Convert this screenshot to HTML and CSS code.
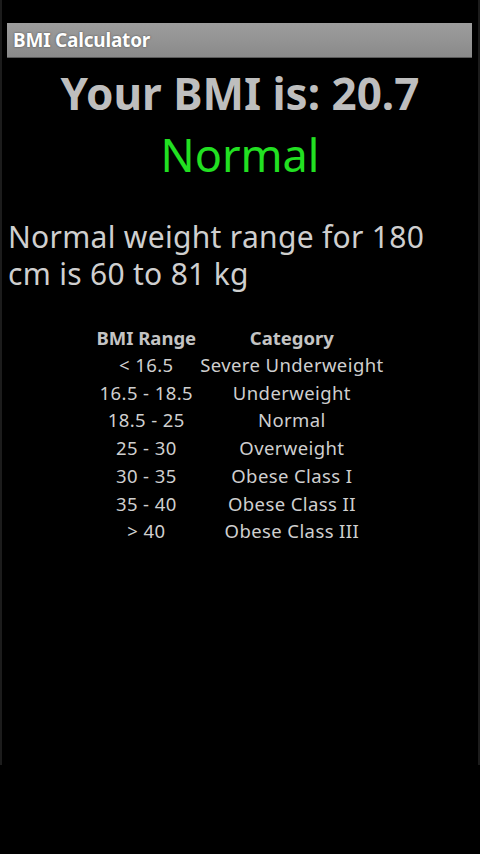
FILE: index.html
```html
<!DOCTYPE html>
<html>
<head>
<meta charset="utf-8">
<link rel="stylesheet" href="styles.css">
</head>
<body>
<div class="screen">
  <div class="status"></div>
  <div class="titlebar"><span class="title">BMI Calculator</span></div>
  <div class="content">
    <h1 class="result">Your BMI is: 20.7</h1>
    <div class="category">Normal</div>
    <p class="range">Normal weight range for 180 cm is 60 to 81 kg</p>
    <table class="bmi-table">
      <thead>
        <tr><th>BMI Range</th><th>Category</th></tr>
      </thead>
      <tbody>
        <tr><td>&lt; 16.5</td><td>Severe Underweight</td></tr>
        <tr><td>16.5 - 18.5</td><td>Underweight</td></tr>
        <tr><td>18.5 - 25</td><td>Normal</td></tr>
        <tr><td>25 - 30</td><td>Overweight</td></tr>
        <tr><td>30 - 35</td><td>Obese Class I</td></tr>
        <tr><td>35 - 40</td><td>Obese Class II</td></tr>
        <tr><td>&gt; 40</td><td>Obese Class III</td></tr>
      </tbody>
    </table>
  </div>
</div>
</body>
</html>
```
FILE: styles.css
```css
html, body {
  margin: 0;
  padding: 0;
  background: #000;
}
body {
  width: 480px;
  height: 854px;
  overflow: hidden;
  font-family: "Noto Sans", "Open Sans", sans-serif;
}
.screen {
  height: 765px;
  box-sizing: border-box;
  border-left: 2px solid #1c1c1c;
  border-right: 2px solid #1c1c1c;
  display: flex;
  flex-direction: column;
}
.status {
  height: 23px;
  flex: none;
}
.titlebar {
  flex: none;
  height: 35px;
  margin: 0 6px 0 5px;
  background: linear-gradient(#9d9d9d, #8a8a8a);
  border-bottom: 1px solid #5a5a5a;
  display: flex;
  align-items: center;
  padding-left: 6px;
  box-sizing: border-box;
}
.title {
  color: #fff;
  font-weight: bold;
  font-size: 19px;
  text-shadow: 0 0 2px #444;
  letter-spacing: -0.2px;
}
.content {
  padding: 0 6px;
}
.result {
  margin: 8px 0 0;
  text-align: center;
  color: #bebebe;
  font-size: 44px;
  font-weight: bold;
  line-height: 54px;
}
.category {
  text-align: center;
  color: #22e022;
  font-size: 45px;
  line-height: 54px;
  margin-top: 8px;
}
.range {
  margin: 36px 0 0;
  padding-right: 24px;
  color: #cfcfcf;
  font-size: 30px;
  letter-spacing: 0.3px;
  line-height: 37px;
}
.bmi-table {
  margin: 31px auto 0;
  border-collapse: collapse;
  color: #cfcfcf;
  font-size: 18.5px;
}
.bmi-table th {
  font-weight: bold;
  color: #c4c4c4;
  padding: 0 2px;
  height: 28px;
  text-align: center;
}
.bmi-table td {
  padding: 0 2px;
  height: 27.7px;
  line-height: 27.7px;
  letter-spacing: 0.4px;
  text-align: center;
}
```
